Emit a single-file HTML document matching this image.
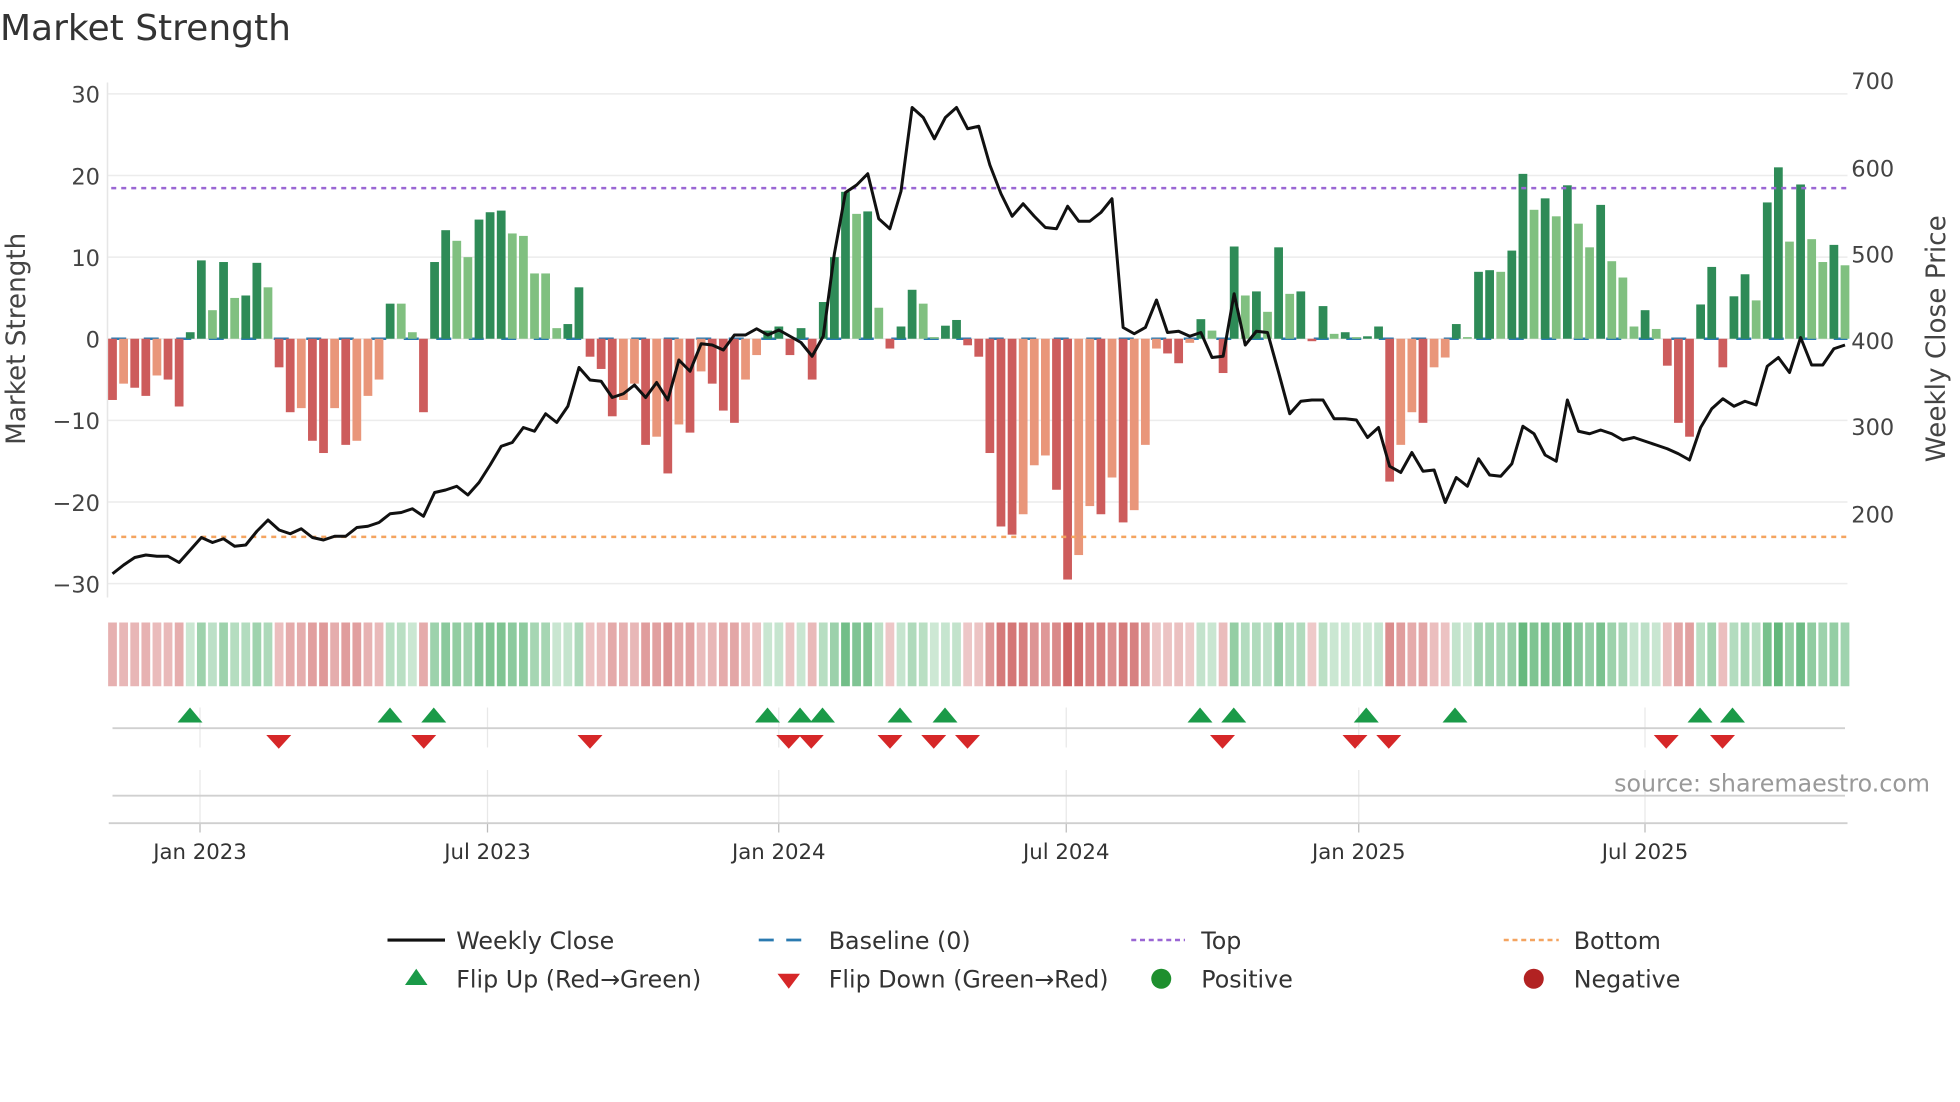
<!DOCTYPE html>
<html><head><meta charset="utf-8"><style>
html,body{margin:0;padding:0;background:#fff;}
svg{display:block;font-family:"DejaVu Sans","Liberation Sans",sans-serif;}
</style></head><body>
<svg id="c" width="1960" height="1102" viewBox="0 0 1568 881.6" xmlns="http://www.w3.org/2000/svg">
<rect width="1568" height="882" fill="#fff"/>
<text x="0" y="32" font-size="28.8" fill="#333">Market Strength</text>
<g id="grid" stroke="#ececec" stroke-width="1.2"></g>
<line x1="86" y1="66" x2="86" y2="478" stroke="#e6e6e6" stroke-width="1.2"/>
<g id="lt" font-size="18" fill="#444" text-anchor="end"></g>
<g id="rt" font-size="18" fill="#444"></g>
<text transform="translate(20,271) rotate(-90)" font-size="21" fill="#444" text-anchor="middle">Market Strength</text>
<text transform="translate(1556,271) rotate(-90)" font-size="21" fill="#444" text-anchor="middle">Weekly Close Price</text>
<line x1="89" y1="271" x2="1478" y2="271" stroke="#2a7ab0" stroke-width="2" stroke-dasharray="12,14"/>
<g id="bars"></g>
<line x1="89" y1="150.5" x2="1478" y2="150.5" stroke="#9a66d4" stroke-width="2" stroke-dasharray="4,4"/>
<line x1="89" y1="429.5" x2="1478" y2="429.5" stroke="#f4a460" stroke-width="2" stroke-dasharray="4,4"/>
<polyline id="price" fill="none" stroke="#111" stroke-width="2.4" stroke-linejoin="round"/>
<g id="heat"></g>
<g id="vgrid" stroke="#e8e8e8" stroke-width="1"></g>
<line x1="90" y1="582.5" x2="1476" y2="582.5" stroke="#d0d0d0" stroke-width="1.5"/>
<line x1="90" y1="636.5" x2="1476" y2="636.5" stroke="#d0d0d0" stroke-width="1.5"/>
<line x1="87" y1="658.5" x2="1478" y2="658.5" stroke="#cfcfcf" stroke-width="1.5"/>
<g id="mk"></g>
<text x="1544" y="633" font-size="19" fill="#999" text-anchor="end">source: sharemaestro.com</text>
<g id="xt" font-size="17" fill="#333" text-anchor="middle"></g>
<g font-size="19" fill="#333">
<line x1="310" y1="752" x2="356" y2="752" stroke="#111" stroke-width="2.5"/>
<text x="365" y="759">Weekly Close</text>
<line x1="607" y1="752" x2="650" y2="752" stroke="#2a7ab0" stroke-width="2.2" stroke-dasharray="12,10"/>
<text x="663" y="759">Baseline (0)</text>
<line x1="905" y1="752" x2="948" y2="752" stroke="#9a66d4" stroke-width="2" stroke-dasharray="4,3"/>
<text x="961" y="759">Top</text>
<line x1="1203" y1="752" x2="1247" y2="752" stroke="#f4a460" stroke-width="2" stroke-dasharray="4,3"/>
<text x="1259" y="759">Bottom</text>
<polygon points="324,788 342,788 333,775" fill="#1a9a48"/>
<text x="365" y="790">Flip Up (Red→Green)</text>
<polygon points="622,779 640,779 631,791" fill="#d62728"/>
<text x="663" y="790">Flip Down (Green→Red)</text>
<circle cx="929" cy="783" r="8" fill="#1e8f2e"/>
<text x="961" y="790">Positive</text>
<circle cx="1227" cy="783" r="8" fill="#b22222"/>
<text x="1259" y="790">Negative</text>
</g>
</svg>
<script>
var NS="http://www.w3.org/2000/svg";
function el(p,t,a){var e=document.createElementNS(NS,t);for(var k in a)e.setAttribute(k,a[k]);document.getElementById(p).appendChild(e);return e;}
var V=[-7.5,-5.5,-6,-7,-4.5,-5,-8.3,0.8,9.6,3.5,9.4,5,5.3,9.3,6.3,-3.5,-9,-8.5,-12.5,-14,-8.5,-13,-12.5,-7,-5,4.3,4.3,0.8,-9,9.4,13.3,12,10,14.6,15.5,15.7,12.9,12.6,8,8,1.3,1.8,6.3,-2.2,-3.7,-9.5,-7.5,-5.5,-13,-12,-16.5,-10.5,-11.5,-4,-5.5,-8.8,-10.3,-5,-2,1,1.5,-2,1.3,-5,4.5,10,18,15.3,15.6,3.8,-1.2,1.5,6,4.3,0.2,1.6,2.3,-0.8,-2.2,-14,-23,-24,-21.5,-15.5,-14.3,-18.5,-29.5,-26.5,-20.5,-21.5,-17,-22.5,-21,-13,-1.2,-1.8,-3,-0.5,2.4,1,-4.2,11.3,5.3,5.8,3.3,11.2,5.5,5.8,-0.3,4,0.6,0.8,0.2,0.3,1.5,-17.5,-13,-9,-10.3,-3.5,-2.3,1.8,0.2,8.2,8.4,8.2,10.8,20.2,15.8,17.2,15,18.8,14.1,11.2,16.4,9.5,7.5,1.5,3.5,1.2,-3.3,-10.3,-12,4.2,8.8,-3.5,5.2,7.9,4.7,16.7,21,11.9,18.9,12.2,9.4,11.5,9];
var n=V.length, x0=90, dx=(1476-90)/(n-1);
function yv(v){return 271-v*6.53;}
for(var v=-30;v<=30;v+=10){var y=yv(v);el("grid","line",{x1:86,y1:y,x2:1478,y2:y});el("lt","text",{x:80,y:y+7}).textContent=(v<0?"\u2212"+(-v):v);}
[[700,64],[600,134],[500,203],[400,272],[300,341],[200,411]].forEach(function(p){el("rt","text",{x:1481,y:p[1]+7}).textContent=p[0];});
for(var i=0;i<n;i++){var v=V[i],p=i?V[i-1]:0,x=x0+i*dx-3.5,c;
 if(v>=0)c=(v>p)?"#2e8b57":"#80c080";else c=(v<p)?"#cd5c5c":"#e9967a";
 var y=yv(Math.max(v,0)),h=Math.abs(v)*6.53;
 el("bars","rect",{x:x,y:y,width:7,height:Math.max(h,0.5),fill:c});
 var a,col;if(v>=0){a=0.25+0.55*Math.min(v/21,1);col="60,165,90";}else{a=0.3+0.6*Math.min(-v/30,1);col="200,80,80";}
 el("heat","rect",{x:x,y:498,width:7,height:51,fill:"rgba("+col+","+a.toFixed(2)+")"});
}
var P=[459,452,446,444,445,445,450,440,430,434,431,437,436,425,416,424,427,423,430,432,429,429,422,421,418,411,410,407,413,394,392,389,396,386,372,357,354,342,345,331,338,325,294,304,305,318,315,308,318,306,320,288,297,275,276,280,268,268,263,268,264,269,274,285,269,203,154,148,139,175,183,153,86,94,111,94,86,103,101,132,155,173,163,173,182,183,165,177,177,170,159,262,267,262,240,266,265,269,266,286,285,235,276,265,266,298,331,321,320,320,335,335,336,350,342,373,378,362,377,376,402,382,389,367,380,381,371,341,347,364,369,320,345,347,344,347,352,350,353,356,359,363,368,342,327,319,325,321,324,293,286,298,270,292,292,279,276];
var pts=[];for(var i=0;i<P.length;i++)pts.push((90+i*(1476-90)/(P.length-1)).toFixed(1)+","+P[i]);
document.getElementById("price").setAttribute("points",pts.join(" "));
[["Jan 2023",160],["Jul 2023",390],["Jan 2024",623],["Jul 2024",853],["Jan 2025",1087],["Jul 2025",1316]].forEach(function(t){
 el("vgrid","line",{x1:t[1],y1:566,x2:t[1],y2:598});el("vgrid","line",{x1:t[1],y1:616,x2:t[1],y2:658});
 el("vgrid","line",{x1:t[1],y1:658,x2:t[1],y2:666,stroke:"#bbb"});
 el("xt","text",{x:t[1],y:687}).textContent=t[0];});
[152,312,347,614,640,658,720,756,960,987,1093,1164,1360,1386].forEach(function(x){el("mk","polygon",{points:(x-10)+",578 "+(x+10)+",578 "+x+",566",fill:"#1a9a48"});});
[223,339,472,631,649,712,747,774,978,1084,1111,1333,1378].forEach(function(x){el("mk","polygon",{points:(x-10)+",588 "+(x+10)+",588 "+x+",599",fill:"#d62728"});});
</script>
</body></html>
